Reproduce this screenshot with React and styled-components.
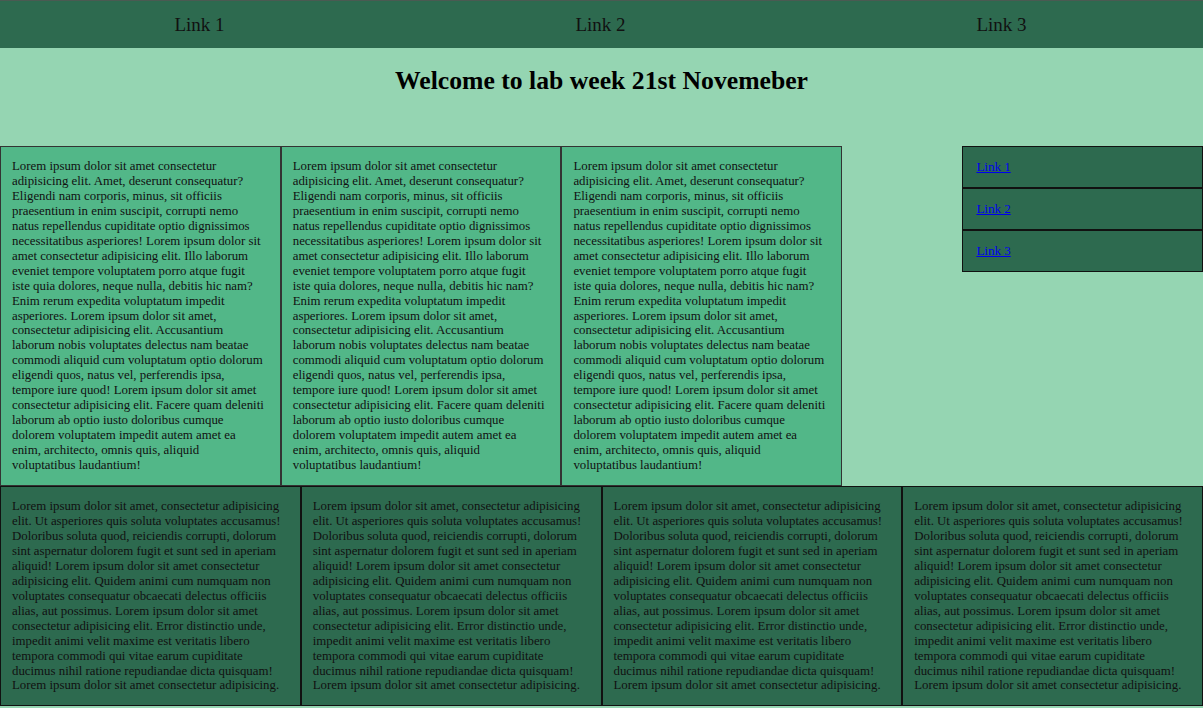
import React from "react";
import styled, { createGlobalStyle } from "styled-components";

const Global = createGlobalStyle`
  html, body {
    margin: 0;
    padding: 0;
    background: #95d5b2;
    font-family: "Liberation Serif", "Times New Roman", serif;
  }
`;

const lorem1 =
  "Lorem ipsum dolor sit amet consectetur adipisicing elit. Amet, deserunt consequatur? Eligendi nam corporis, minus, sit officiis praesentium in enim suscipit, corrupti nemo natus repellendus cupiditate optio dignissimos necessitatibus asperiores! Lorem ipsum dolor sit amet consectetur adipisicing elit. Illo laborum eveniet tempore voluptatem porro atque fugit iste quia dolores, neque nulla, debitis hic nam? Enim rerum expedita voluptatum impedit asperiores. Lorem ipsum dolor sit amet, consectetur adipisicing elit. Accusantium laborum nobis voluptates delectus nam beatae commodi aliquid cum voluptatum optio dolorum eligendi quos, natus vel, perferendis ipsa, tempore iure quod! Lorem ipsum dolor sit amet consectetur adipisicing elit. Facere quam deleniti laborum ab optio iusto doloribus cumque dolorem voluptatem impedit autem amet ea enim, architecto, omnis quis, aliquid voluptatibus laudantium!";

const lorem2 =
  "Lorem ipsum dolor sit amet, consectetur adipisicing elit. Ut asperiores quis soluta voluptates accusamus! Doloribus soluta quod, reiciendis corrupti, dolorum sint aspernatur dolorem fugit et sunt sed in aperiam aliquid! Lorem ipsum dolor sit amet consectetur adipisicing elit. Quidem animi cum numquam non voluptates consequatur obcaecati delectus officiis alias, aut possimus. Lorem ipsum dolor sit amet consectetur adipisicing elit. Error distinctio unde, impedit animi velit maxime est veritatis libero tempora commodi qui vitae earum cupiditate ducimus nihil ratione repudiandae dicta quisquam! Lorem ipsum dolor sit amet consectetur adipisicing.";

export default function App() {
  return (
    <>
      <Global />
      <Nav>
        <NavLink href="#">Link 1</NavLink>
        <NavLink href="#">Link 2</NavLink>
        <NavLink href="#">Link 3</NavLink>
      </Nav>
      <Title>Welcome to lab week 21st Novemeber</Title>
      <Main>
        <Articles>
          <Article>{lorem1}</Article>
          <Article>{lorem1}</Article>
          <Article>{lorem1}</Article>
        </Articles>
        <Aside>
          <AsideItem><a href="#">Link 1</a></AsideItem>
          <AsideItem><a href="#">Link 2</a></AsideItem>
          <AsideItem><a href="#">Link 3</a></AsideItem>
        </Aside>
      </Main>
      <Footer>
        <Section>{lorem2}</Section>
        <Section>{lorem2}</Section>
        <Section>{lorem2}</Section>
        <Section>{lorem2}</Section>
      </Footer>
    </>
  );
}

const Nav = styled.nav`
  display: grid;
  grid-template-columns: repeat(3, 1fr);
  height: 48px;
  background: #2d6a4f;
  border-top: 1px solid #4a5a52;
  box-sizing: border-box;
`;

const NavLink = styled.a`
  display: flex;
  align-items: center;
  justify-content: center;
  padding-right: 2px;
  color: #111;
  text-decoration: none;
  font-size: 19px;
`;

const Title = styled.h1`
  margin: 0;
  height: 98px;
  padding-top: 18px;
  box-sizing: border-box;
  text-align: center;
  font-size: 25.7px;
  font-weight: 700;
  color: #000;
`;

const Main = styled.main`
  display: flex;
  justify-content: space-between;
  align-items: flex-start;
`;

const Articles = styled.div`
  display: flex;
  width: 70%;
`;

const Article = styled.article`
  flex: 1;
  background: #52b788;
  border: 1px solid #333;
  padding: 12px 14px 12px 11px;
  font-size: 12.85px;
  line-height: 14.95px;
  color: #111;
`;

const Aside = styled.aside`
  width: 20%;
  display: flex;
  flex-direction: column;
`;

const AsideItem = styled.div`
  background: #2d6a4f;
  border: 1px solid #111;
  height: 42px;
  box-sizing: border-box;
  display: flex;
  align-items: center;
  padding: 0 13px;
  font-size: 13px;

  a {
    color: #0000ee;
  }
`;

const Footer = styled.footer`
  display: grid;
  grid-template-columns: repeat(4, 1fr);
`;

const Section = styled.section`
  background: #2d6a4f;
  border: 1px solid #111;
  padding: 12px 12px 12px 11px;
  font-size: 12.85px;
  line-height: 14.95px;
  color: #111;
`;
